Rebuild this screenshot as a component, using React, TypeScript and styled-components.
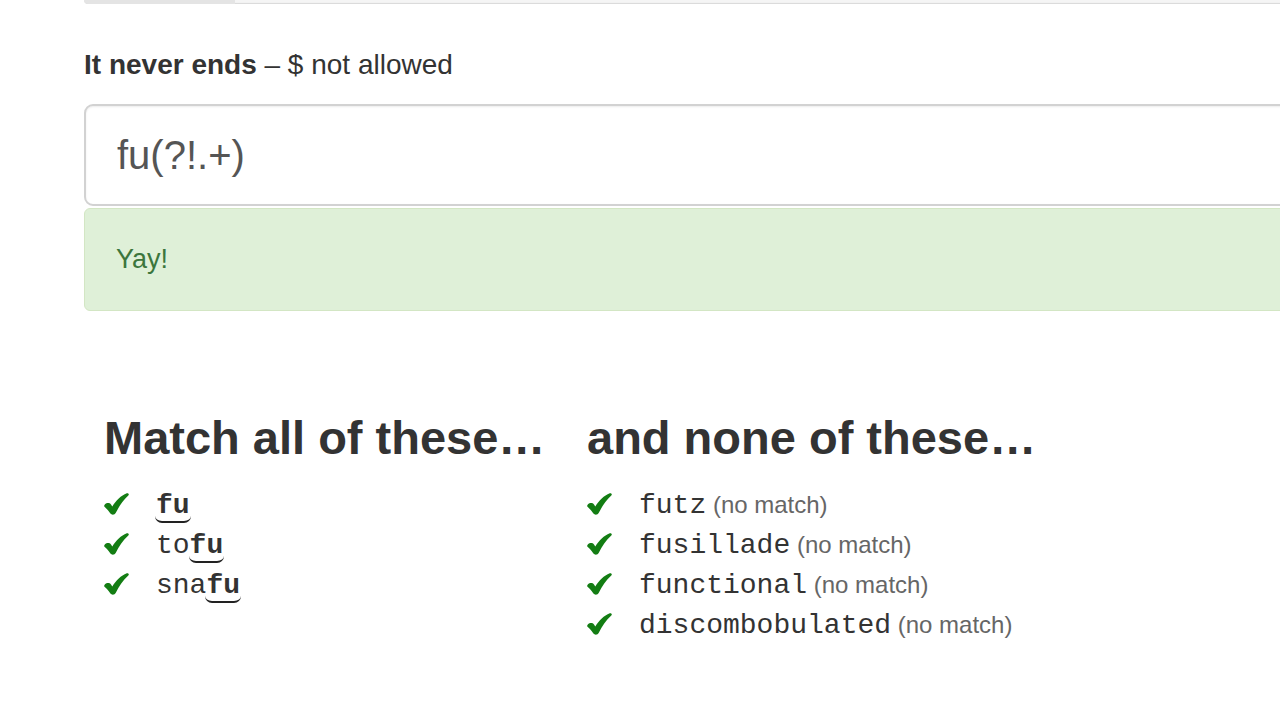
import React from "react";
import styled, { createGlobalStyle } from "styled-components";

const Global = createGlobalStyle`
  html, body { margin: 0; padding: 0; background: #fff; overflow: hidden; }
  body { font-family: "Liberation Sans", Arial, sans-serif; color: #333; }
`;

const Page = styled.div`
  width: 1500px;
  padding-left: 84px;
  box-sizing: border-box;
`;

const Progress = styled.div`
  height: 4px;
  background: #f5f5f5;
  border-radius: 0 0 5px 5px;
  box-shadow: inset 0 -1px 1px rgba(0, 0, 0, 0.12);
  overflow: hidden;
  display: flex;
`;

const ProgressFill = styled.div`
  background: #e4e4e4;
  height: 100%;
  border-radius: 0 0 0 5px;
`;

const Label = styled.div`
  margin-top: 41px;
  font-size: 28px;
  line-height: 40px;
  color: #333;
  strong { font-weight: 700; }
`;

const Input = styled.div`
  margin-top: 19px;
  height: 102px;
  box-sizing: border-box;
  border: 2px solid #d2d2d2;
  border-radius: 9px;
  box-shadow: inset 0 1px 2px rgba(0, 0, 0, 0.08);
  padding: 0 31px;
  display: flex;
  align-items: center;
  font-size: 40px;
  color: #555;
`;

const Alert = styled.div`
  margin-top: 2px;
  height: 103px;
  box-sizing: border-box;
  background: #dff0d8;
  border: 1px solid #d3e6c4;
  border-radius: 6px;
  padding: 0 31px;
  display: flex;
  align-items: center;
  font-size: 27px;
  color: #3c763d;
`;

const Columns = styled.div`
  margin-top: 99px;
  padding-left: 20px;
  display: grid;
  grid-template-columns: 483px 483px;
`;

const Heading = styled.h2`
  margin: 0 0 19px;
  font-size: 47px;
  line-height: 56px;
  font-weight: 700;
  color: #333;
  white-space: nowrap;
`;

const List = styled.ul`
  margin: 0;
  padding: 0;
  list-style: none;
`;

const Row = styled.li`
  display: grid;
  grid-template-columns: 52px auto;
  align-items: center;
  height: 40px;
`;

const CheckSvg = styled.svg`
  display: block;
  width: 25px;
  height: 22px;
  margin-top: -2px;
`;

const Word = styled.span`
  font-family: "Liberation Mono", "Courier New", monospace;
  font-size: 28px;
  color: #333;
  white-space: nowrap;
`;

const Hit = styled.span`
  font-weight: 700;
  border-bottom: 2px solid #222;
  border-radius: 0 0 7px 7px;
  padding: 0 1px 0;
  margin: 0 -1px;
`;

const NoMatch = styled.span`
  font-family: "Liberation Sans", Arial, sans-serif;
  font-size: 24px;
  color: #666;
`;

const Check = () => (
  <CheckSvg viewBox="0 0 25 22" aria-hidden="true">
    <path
      d="M0.5 12 C2 9.5 5.5 9.5 7 11.5 L8.3 13.5 C12 7.5 17 2.5 22.8 0.3 C24.6 -0.2 25.4 1.6 24.3 2.6 C19 7.5 15 13.5 11.8 19.8 C10.8 22 7.6 22.2 6.4 20.5 C4.6 17.8 2.6 15.6 0.8 14 C0 13.3 0 12.7 0.5 12 Z"
      fill="#137d13"
    />
  </CheckSvg>
);

const matches: [string, string][] = [
  ["", "fu"],
  ["to", "fu"],
  ["sna", "fu"],
];

const nonMatches = ["futz", "fusillade", "functional", "discombobulated"];

export default function App() {
  return (
    <Page>
      <Global />
      <Progress>
        <ProgressFill style={{ width: "151px" }} />
      </Progress>
      <Label>
        <strong>It never ends</strong> – $ not allowed
      </Label>
      <Input>fu(?!.+)</Input>
      <Alert>Yay!</Alert>
      <Columns>
        <div>
          <Heading>Match all of these…</Heading>
          <List>
            {matches.map(([pre, hit]) => (
              <Row key={pre + hit}>
                <Check />
                <Word>
                  {pre}
                  <Hit>{hit}</Hit>
                </Word>
              </Row>
            ))}
          </List>
        </div>
        <div>
          <Heading>and none of these…</Heading>
          <List>
            {nonMatches.map((w) => (
              <Row key={w}>
                <Check />
                <Word>
                  {w}
                  <NoMatch> (no match)</NoMatch>
                </Word>
              </Row>
            ))}
          </List>
        </div>
      </Columns>
    </Page>
  );
}
